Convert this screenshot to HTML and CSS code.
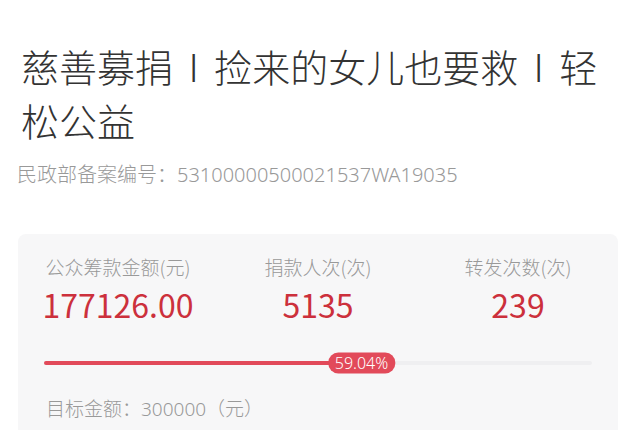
FILE: index.html
```html
<!DOCTYPE html>
<html lang="zh">
<head>
<meta charset="utf-8">
<link rel="stylesheet" href="styles.css">
</head>
<body>
<div class="page">
  <h1 class="title">慈善募捐 I 捡来的女儿也要救 I 轻松公益</h1>
  <p class="reg">民政部备案编号：53100000500021537WA19035</p>
  <div class="card">
    <div class="stats">
      <div class="stat">
        <div class="label">公众筹款金额(元)</div>
        <div class="value">177126.00</div>
      </div>
      <div class="stat">
        <div class="label">捐款人次(次)</div>
        <div class="value">5135</div>
      </div>
      <div class="stat">
        <div class="label">转发次数(次)</div>
        <div class="value">239</div>
      </div>
    </div>
    <div class="progress">
      <div class="track">
        <div class="fill" style="width:59.04%"></div>
        <span class="badge" style="left:59.04%">59.04%</span>
      </div>
    </div>
    <div class="target">目标金额：300000（元）</div>
  </div>
</div>
</body>
</html>
```
FILE: styles.css
```css
* { box-sizing: border-box; }
html, body { margin: 0; padding: 0; background: #fff; }
body {
  font-family: "Noto Sans CJK SC", "Noto Sans", sans-serif;
  width: 640px;
  height: 430px;
  overflow: hidden;
}
.page { padding-top: 39px; }
.title {
  margin: 0 22px 0 21px;
  font-size: 38px;
  line-height: 54px;
  font-weight: 300;
  word-spacing: 7px;
  color: #333;
}
.reg {
  margin: 13px 0 0 17px;
  font-family: "Noto Sans", "Noto Sans CJK SC", sans-serif;
  font-size: 20px;
  line-height: 30px;
  font-weight: 300;
  color: #999;
}
.card {
  margin: 44px 22px 0 18px;
  background: #f7f7f8;
  border-radius: 8px;
  padding: 20px 0 30px;
}
.stats {
  display: grid;
  grid-template-columns: repeat(3, 200px);
}
.stat { text-align: center; }
.label {
  font-size: 19px;
  line-height: 26px;
  font-weight: 300;
  color: #999;
}
.value {
  margin-top: 5px;
  font-size: 32px;
  line-height: 38px;
  color: #cc303c;
}
.progress {
  margin: 29px 26px 0 26px;
  height: 22px;
  display: flex;
  align-items: center;
}
.track {
  position: relative;
  flex: 1;
  height: 4px;
  background: #efeff1;
  border-radius: 2px;
}
.fill {
  height: 4px;
  background: #e24a5a;
  border-radius: 2px;
}
.badge {
  position: absolute;
  top: 50%;
  margin-left: -6px;
  transform: translate(-50%, -50%);
  background: #e24a5a;
  color: #fff;
  font-size: 16px;
  line-height: 21px;
  padding: 0 7px;
  border-radius: 10px;
  white-space: nowrap;
  font-weight: 300;
  font-family: "Noto Sans", "Noto Sans CJK SC", sans-serif;
}
.target {
  margin: 22px 0 0 28px;
  font-family: "Noto Sans", "Noto Sans CJK SC", sans-serif;
  font-size: 19px;
  line-height: 26px;
  font-weight: 300;
  color: #999;
}
```
